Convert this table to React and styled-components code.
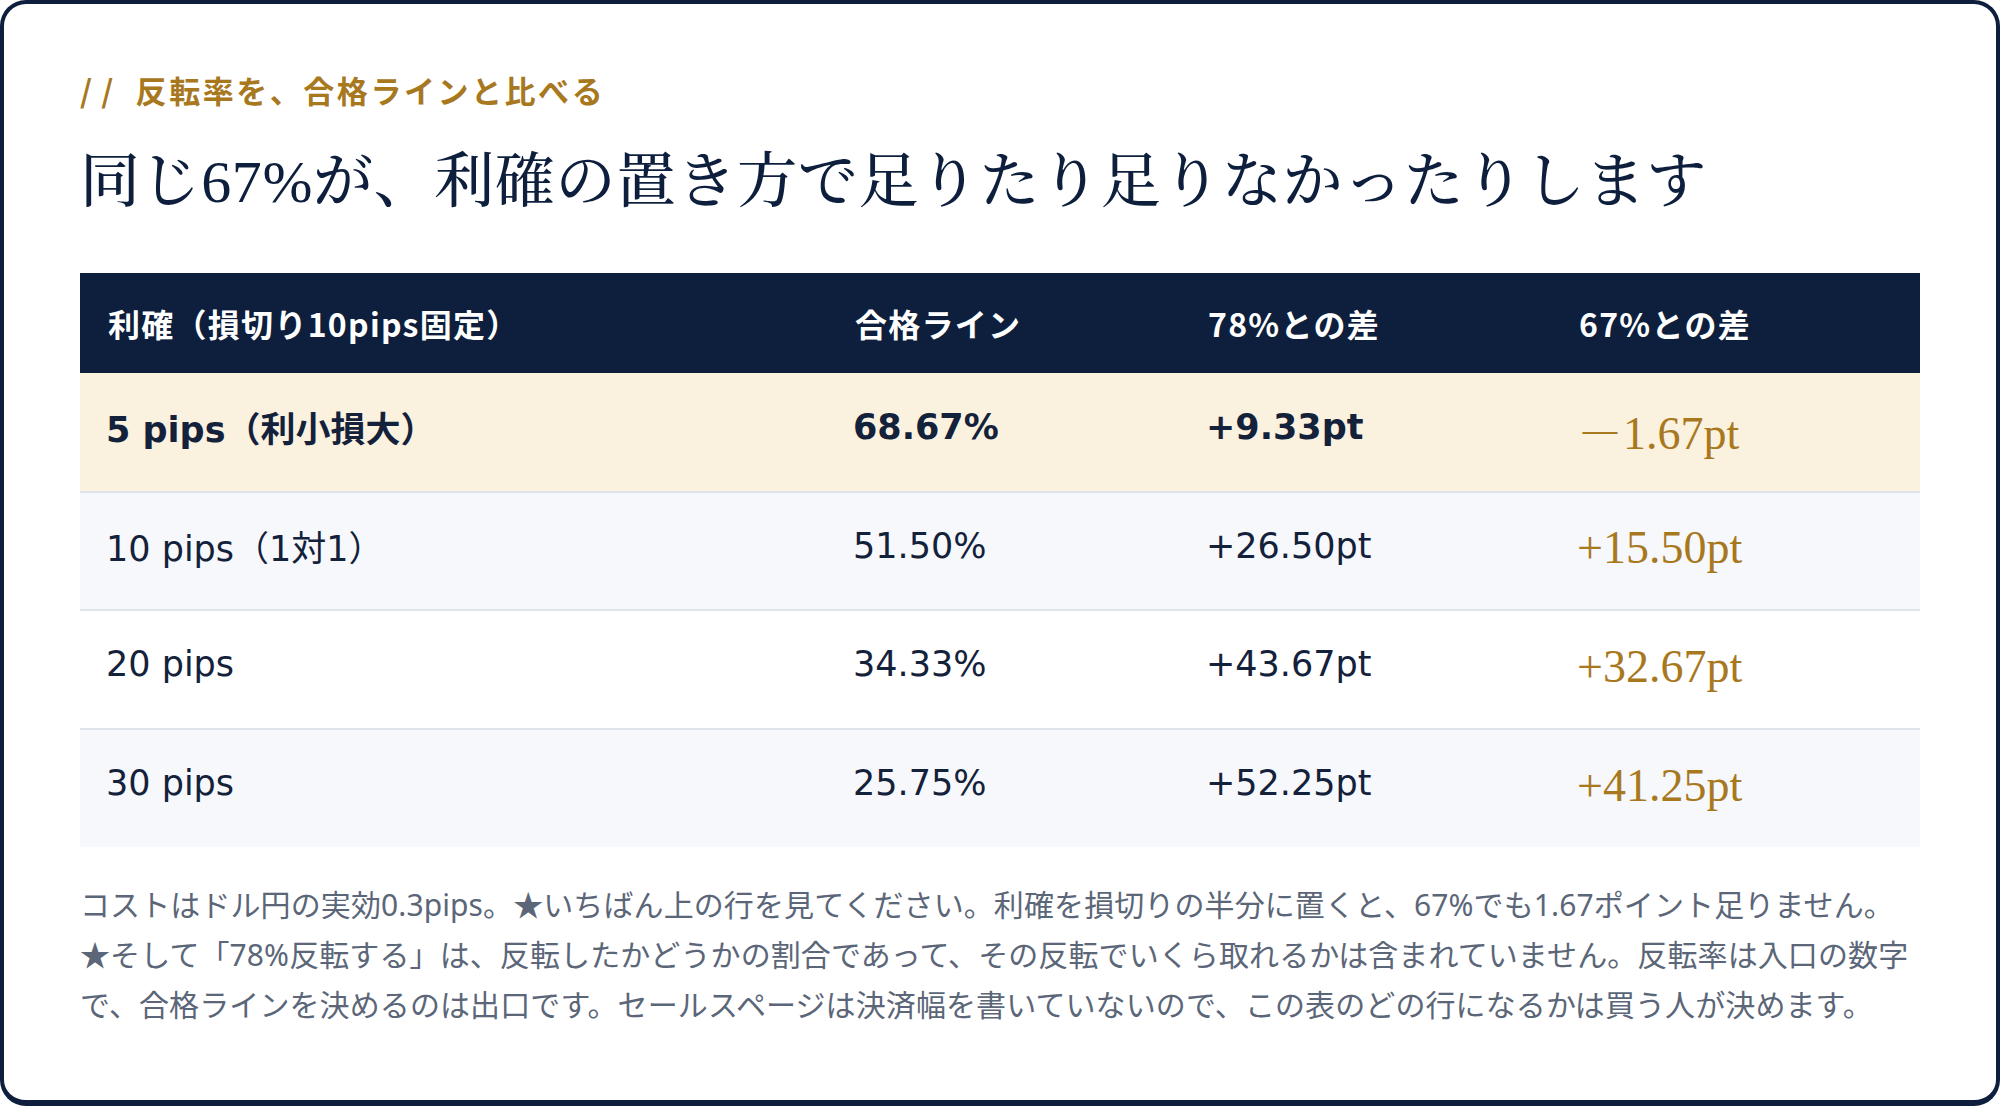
import React from "react";
import styled, { createGlobalStyle } from "styled-components";

const GlobalStyle = createGlobalStyle`
  html, body {
    margin: 0;
    padding: 0;
    background: #ffffff;
  }
  body {
    font-family: "DejaVu Sans", "Noto Sans CJK JP", sans-serif;
    color: #13213a;
  }
`;

const serifStack = `"Liberation Serif", "Noto Serif CJK JP", "Noto Serif JP", serif`;

const Card = styled.section`
  box-sizing: border-box;
  width: 2000px;
  height: 1106px;
  border: 4px solid #0d1f3c;
  border-bottom-width: 6px;
  border-radius: 26px;
  background: #ffffff;
  padding: 67px 76px 0 76px;
`;

const Eyebrow = styled.div`
  font-family: "Noto Sans CJK JP", sans-serif;
  font-size: 31px;
  line-height: 38px;
  font-weight: 700;
  letter-spacing: 0.082em;
  color: #a8781f;
`;

const Slashes = styled.span`
  letter-spacing: 0.3em;
  margin-right: 13px;
`;

const Title = styled.h2`
  margin: 34px 0 0;
  font-family: ${serifStack};
  font-weight: 500;
  font-size: 60px;
  line-height: 78px;
  letter-spacing: 0.01em;
  color: #0d1f3c;
`;

const Table = styled.table`
  margin-top: 52px;
  width: 1840px;
  border-collapse: collapse;
  table-layout: fixed;
`;

const HeadCell = styled.th`
  height: 100px;
  padding: 0 28px;
  background: #0d1f3c;
  color: #ffffff;
  text-align: left;
  font-family: "Noto Sans CJK JP", sans-serif;
  font-size: 32px;
  font-weight: 700;
  letter-spacing: 0.04em;
  vertical-align: middle;
`;

const Row = styled.tr`
  background: ${(p) => (p.$highlight ? "#fbf1df" : p.$alt ? "#f7f8fb" : "#ffffff")};
  border-bottom: 2px solid #dfe3eb;
  &:last-child {
    border-bottom: none;
  }
`;

const Cell = styled.td`
  height: 118.5px;
  box-sizing: border-box;
  padding: 0 26px 10px;
  font-size: 35px;
  font-weight: ${(p) => (p.$bold ? 700 : 400)};
  color: #13213a;
  vertical-align: middle;
`;

const DiffCell = styled.td`
  height: 118.5px;
  box-sizing: border-box;
  padding: 0 26px 6px;
  font-family: ${serifStack};
  font-size: 46px;
  color: #a8781f;
  vertical-align: middle;
`;

const Note = styled.p`
  margin: 33px 0 0;
  width: 1840px;
  white-space: nowrap;
  font-family: "Noto Sans", "Noto Sans CJK JP", sans-serif;
  font-size: 30px;
  line-height: 50px;
  letter-spacing: 0.1px;
  color: #5b6678;
`;

const rows = [
  { tp: "5 pips（利小損大）", line: "68.67%", d78: "+9.33pt", d67: "－1.67pt", highlight: true },
  { tp: "10 pips（1対1）", line: "51.50%", d78: "+26.50pt", d67: "+15.50pt", alt: true },
  { tp: "20 pips", line: "34.33%", d78: "+43.67pt", d67: "+32.67pt" },
  { tp: "30 pips", line: "25.75%", d78: "+52.25pt", d67: "+41.25pt", alt: true },
];

export default function App() {
  return (
    <>
      <GlobalStyle />
      <Card>
        <Eyebrow>
          <Slashes>//</Slashes>反転率を、合格ラインと比べる
        </Eyebrow>
        <Title>同じ67%が、利確の置き方で足りたり足りなかったりします</Title>
        <Table>
          <colgroup>
            <col style={{ width: "747px" }} />
            <col style={{ width: "353px" }} />
            <col style={{ width: "371px" }} />
            <col />
          </colgroup>
          <thead>
            <tr>
              <HeadCell>利確（損切り10pips固定）</HeadCell>
              <HeadCell>合格ライン</HeadCell>
              <HeadCell>78%との差</HeadCell>
              <HeadCell>67%との差</HeadCell>
            </tr>
          </thead>
          <tbody>
            {rows.map((r) => (
              <Row key={r.tp} $highlight={r.highlight} $alt={r.alt}>
                <Cell $bold={r.highlight}>{r.tp}</Cell>
                <Cell $bold={r.highlight}>{r.line}</Cell>
                <Cell $bold={r.highlight}>{r.d78}</Cell>
                <DiffCell>{r.d67}</DiffCell>
              </Row>
            ))}
          </tbody>
        </Table>
        <Note>
          コストはドル円の実効0.3pips。★いちばん上の行を見てください。利確を損切りの半分に置くと、67%でも1.67ポイント足りません。
          <br />
          ★そして「78%反転する」は、反転したかどうかの割合であって、その反転でいくら取れるかは含まれていません。反転率は入口の数字
          <br />
          で、合格ラインを決めるのは出口です。セールスページは決済幅を書いていないので、この表のどの行になるかは買う人が決めます。
        </Note>
      </Card>
    </>
  );
}
